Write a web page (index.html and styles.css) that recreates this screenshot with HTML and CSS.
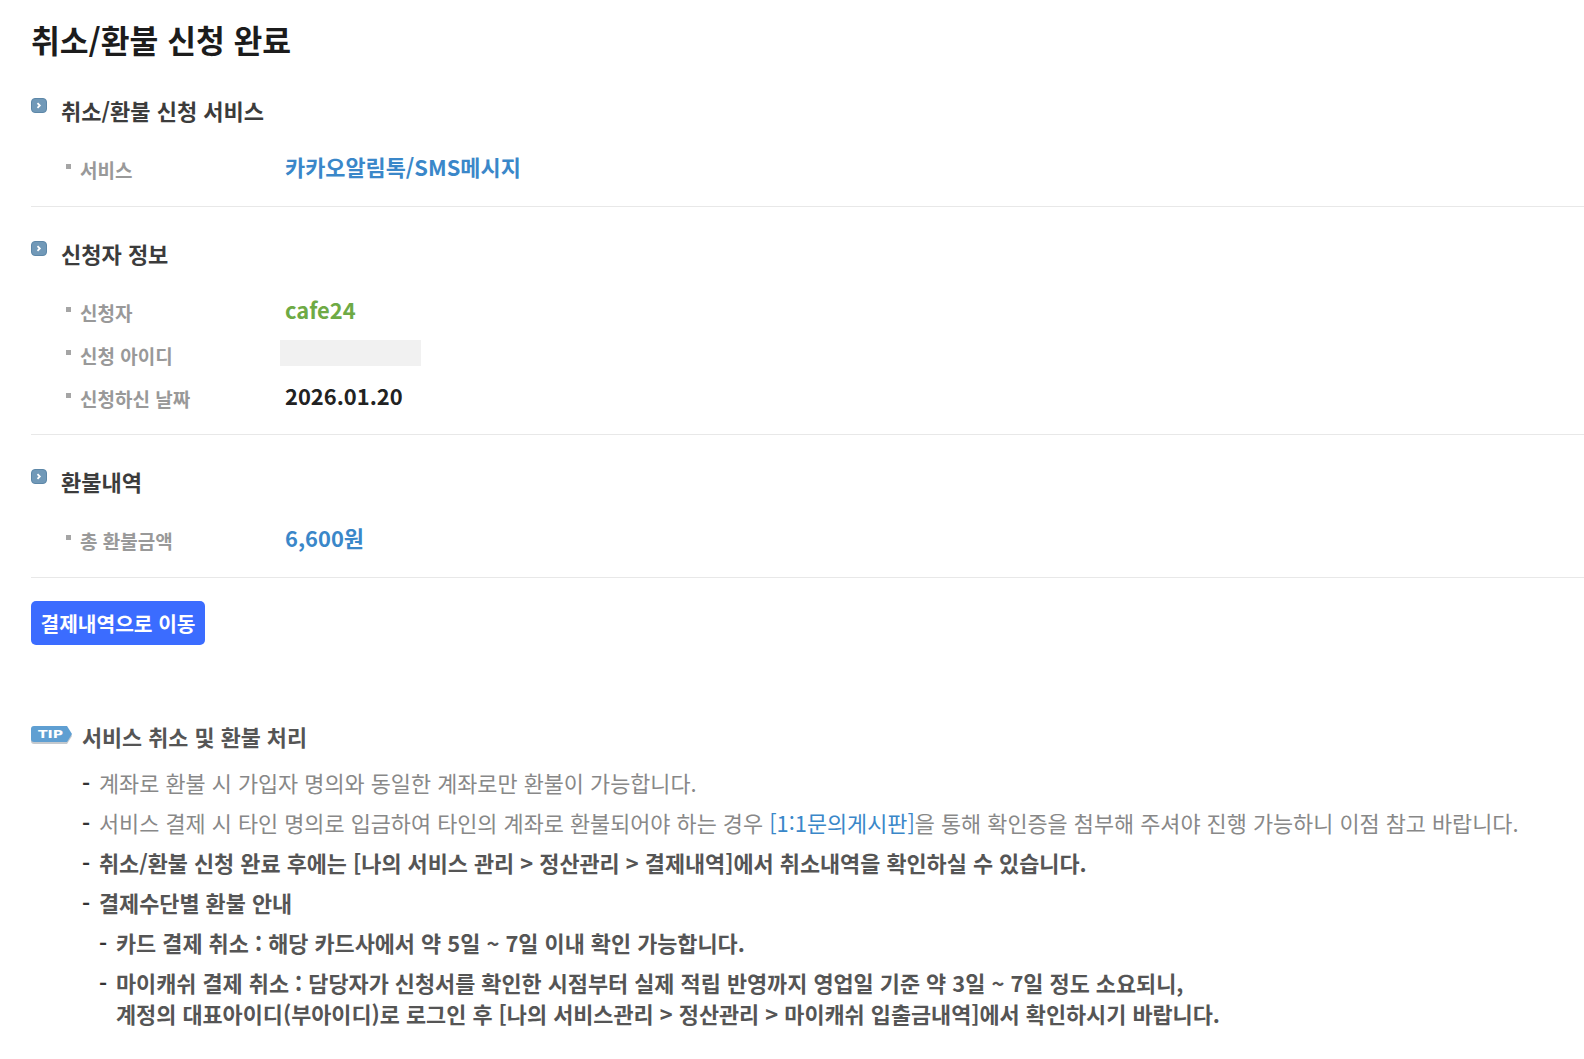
FILE: index.html
```html
<!DOCTYPE html>
<html lang="ko">
<head>
	<meta charset="utf-8">
	<title>취소/환불 신청 완료</title>
	<link rel="stylesheet" href="styles.css">
</head>
<body>
	<h1>취소/환불 신청 완료</h1>

	<div class="section">
		<h2><svg class="bullet" width="16" height="16" viewBox="0 0 16 16"><rect x="0.5" y="0.5" width="15" height="14" rx="3.5" fill="#7199b8" stroke="#5d87a8"/><path d="M6.5 5.2l2.3 2.3-2.3 2.3" fill="none" stroke="#fff" stroke-width="1.8"/></svg>취소/환불 신청 서비스</h2>
		<div class="row"><span class="label">서비스</span><span class="value blue">카카오알림톡/SMS메시지</span></div>
	</div>

	<div class="section">
		<h2><svg class="bullet" width="16" height="16" viewBox="0 0 16 16"><rect x="0.5" y="0.5" width="15" height="14" rx="3.5" fill="#7199b8" stroke="#5d87a8"/><path d="M6.5 5.2l2.3 2.3-2.3 2.3" fill="none" stroke="#fff" stroke-width="1.8"/></svg>신청자 정보</h2>
		<div class="row"><span class="label">신청자</span><span class="value green">cafe24</span></div>
		<div class="row"><span class="label">신청 아이디</span><span class="masked"></span></div>
		<div class="row"><span class="label">신청하신 날짜</span><span class="value">2026.01.20</span></div>
	</div>

	<div class="section">
		<h2><svg class="bullet" width="16" height="16" viewBox="0 0 16 16"><rect x="0.5" y="0.5" width="15" height="14" rx="3.5" fill="#7199b8" stroke="#5d87a8"/><path d="M6.5 5.2l2.3 2.3-2.3 2.3" fill="none" stroke="#fff" stroke-width="1.8"/></svg>환불내역</h2>
		<div class="row"><span class="label">총 환불금액</span><span class="value blue">6,600원</span></div>
	</div>

	<a class="btn" href="#">결제내역으로 이동</a>

	<div class="tip">
		<h3><svg class="tip_icon" width="42" height="19" viewBox="0 0 42 19"><path d="M3 2h33l5 8-5 8H3a3 3 0 0 1-3-3V5a3 3 0 0 1 3-3z" fill="#c4c9ce"/><path d="M3 0h33l5 8-5 8H3a3 3 0 0 1-3-3V3a3 3 0 0 1 3-3z" fill="#5f9fd2"/><text x="7" y="12" class="tip_text" textLength="25" lengthAdjust="spacingAndGlyphs">TIP</text></svg>서비스 취소 및 환불 처리</h3>
		<ul>
			<li>계좌로 환불 시 가입자 명의와 동일한 계좌로만 환불이 가능합니다.</li>
			<li>서비스 결제 시 타인 명의로 입금하여 타인의 계좌로 환불되어야 하는 경우 <a href="#">[1:1문의게시판]</a>을 통해 확인증을 첨부해 주셔야 진행 가능하니 이점 참고 바랍니다.</li>
			<li class="strong">취소/환불 신청 완료 후에는 [나의 서비스 관리 &gt; 정산관리 &gt; 결제내역]에서 취소내역을 확인하실 수 있습니다.</li>
			<li class="strong">결제수단별 환불 안내</li>
			<li class="strong sub">카드 결제 취소 : 해당 카드사에서 약 5일 ~ 7일 이내 확인 가능합니다.</li>
			<li class="strong sub">마이캐쉬 결제 취소 : 담당자가 신청서를 확인한 시점부터 실제 적립 반영까지 영업일 기준 약 3일 ~ 7일 정도 소요되니,<br>계정의 대표아이디(부아이디)로 로그인 후 [나의 서비스관리 &gt; 정산관리 &gt; 마이캐쉬 입출금내역]에서 확인하시기 바랍니다.</li>
		</ul>
	</div>
</body>
</html>
```

FILE: styles.css
```css
body {
	margin: 0;
	padding: 0 0 0 31px;
	font-family: "Noto Sans CJK KR", "Noto Sans", sans-serif;
	color: #222;
	background: #fff;
	overflow-x: hidden;
}
h1 {
	font-size: 31.3px;
	line-height: 44px;
	font-weight: 700;
	color: #1c1c1c;
	margin: 0;
	padding: 18px 0 2px 0;
}
h2 {
	display: flex;
	font-size: 22px;
	line-height: 32px;
	font-weight: 700;
	color: #3c3c3c;
	margin: 0 0 21px 0;
}
.bullet {
	margin: 4px 14px 0 0;
}
.section {
	padding: 30px 0 15.5px 0;
	border-bottom: 1px solid #e8e8e8;
}
.row {
	display: flex;
	align-items: center;
	height: 43px;
}
.label {
	position: relative;
	width: 254px;
	margin-top: 2px;
	padding-left: 49px;
	box-sizing: border-box;
	font-size: 19px;
	font-weight: 700;
	color: #999;
}
.label:before {
	content: "";
	position: absolute;
	left: 35px;
	top: 8px;
	width: 5px;
	height: 5px;
	background: #a5a5a5;
}
.value {
	margin-bottom: 4px;
	font-size: 21.9px;
	font-weight: 700;
	color: #222;
}
.blue {
	color: #3a87c9;
}
.green {
	color: #6eaa45;
}
.masked {
	width: 141px;
	height: 26px;
	margin: 0 0 2px -5px;
	background: #f1f1f1;
}
.btn {
	display: block;
	width: 174px;
	height: 44px;
	margin-top: 23px;
	border-radius: 5px;
	background: #3b6cff;
	color: #fff;
	font-size: 20.3px;
	font-weight: 700;
	line-height: 44px;
	text-align: center;
	text-decoration: none;
}
.tip {
	margin-top: 76px;
}
.tip h3 {
	display: flex;
	font-size: 21.8px;
	line-height: 32px;
	font-weight: 700;
	color: #555;
	margin: 0 0 14px 0;
}
.tip_icon {
	margin: 5px 9px 0 0;
}
.tip_text {
	font-family: "DejaVu Sans", sans-serif;
	font-size: 10px;
	font-weight: 700;
	fill: #fff;
}
ul {
	list-style: none;
	margin: 0;
	padding: 0 0 0 51px;
}
li {
	position: relative;
	padding-left: 17px;
	margin-bottom: 9px;
	font-size: 21.85px;
	line-height: 31px;
	color: #888;
}
li:before {
	content: "-";
	position: absolute;
	left: 0;
	font-weight: 700;
	color: #333;
}
li a {
	color: #3a87c9;
	text-decoration: none;
}
.strong {
	font-weight: 700;
	color: #555;
}
.sub {
	margin-left: 17px;
}
```
